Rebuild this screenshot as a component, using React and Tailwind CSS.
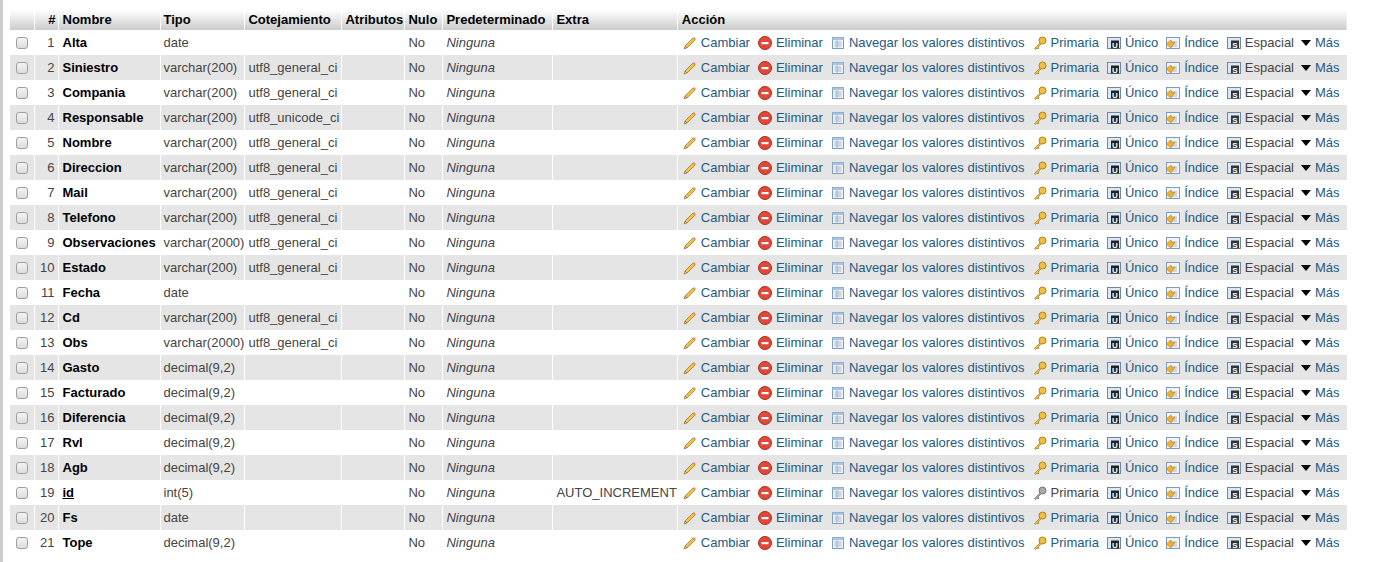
const rows = [
["Alta","date","",""],["Siniestro","varchar(200)","utf8_general_ci",""],["Compania","varchar(200)","utf8_general_ci",""],["Responsable","varchar(200)","utf8_unicode_ci",""],["Nombre","varchar(200)","utf8_general_ci",""],["Direccion","varchar(200)","utf8_general_ci",""],["Mail","varchar(200)","utf8_general_ci",""],["Telefono","varchar(200)","utf8_general_ci",""],["Observaciones","varchar(2000)","utf8_general_ci",""],["Estado","varchar(200)","utf8_general_ci",""],["Fecha","date","",""],["Cd","varchar(200)","utf8_general_ci",""],["Obs","varchar(2000)","utf8_general_ci",""],["Gasto","decimal(9,2)","",""],["Facturado","decimal(9,2)","",""],["Diferencia","decimal(9,2)","",""],["Rvl","decimal(9,2)","",""],["Agb","decimal(9,2)","",""],["id","int(5)","","AUTO_INCREMENT"],["Fs","date","",""],["Tope","decimal(9,2)","",""]];

const Pencil = () => (<svg width="16" height="16" viewBox="0 0 16 16"><path d="M3 11 L11 3 L13 5 L5 13 Z" fill="#f3c24b" stroke="#b07a1a" strokeWidth="0.8"/><path d="M11 3 L12 2 L14 4 L13 5Z" fill="#e88"/><path d="M3 11 L5 13 L2 14 Z" fill="#e8d0a0" stroke="#806030" strokeWidth="0.6"/></svg>);
const Del = () => (<svg width="16" height="16" viewBox="0 0 16 16"><circle cx="8" cy="8" r="6.5" fill="#e04838" stroke="#b02a20"/><rect x="4.5" y="7" width="7" height="2.2" fill="#fff"/></svg>);
const Browse = () => (<svg width="16" height="16" viewBox="0 0 16 16"><rect x="2.5" y="2.5" width="11" height="11" fill="#eef4fb" stroke="#7c9cc0"/><rect x="2.5" y="2.5" width="11" height="2.5" fill="#a8c4e0"/><path d="M4.5 7h7M4.5 9h7M4.5 11h7M7 5v8" stroke="#9ab" strokeWidth="0.8"/></svg>);
const Key = ({g}) => (<svg width="16" height="16" viewBox="0 0 16 16"><circle cx="10.5" cy="5.5" r="3.5" fill={g?"#aaa":"#f0c040"} stroke={g?"#777":"#b08020"}/><path d="M8 8 L2.5 13.5 L3.5 14.5 L5 13 L6 14 L7 13 L6 12 L9 9" fill={g?"#aaa":"#f0c040"} stroke={g?"#777":"#b08020"} strokeWidth="0.8"/></svg>);
const Uniq = () => (<svg width="16" height="16" viewBox="0 0 16 16"><rect x="1.5" y="2.5" width="13" height="11" fill="#dfe8f2" stroke="#6a88aa"/><rect x="5" y="5.5" width="8" height="8" fill="#222"/><text x="9" y="12.5" fontSize="8" fontWeight="bold" fill="#fff" textAnchor="middle" fontFamily="Liberation Sans">U</text></svg>);
const Idx = () => (<svg width="16" height="16" viewBox="0 0 16 16"><rect x="1.5" y="2.5" width="13" height="11" fill="#eef4fb" stroke="#7c9cc0"/><path d="M4 7h8M4 9h8M4 11h8" stroke="#9ab" strokeWidth="0.8"/><path d="M1 9 L6 5 L7 8 L10 7 L6 13 Z" fill="#f0b030" stroke="#c08010" strokeWidth="0.6"/></svg>);
const Spat = () => (<svg width="16" height="16" viewBox="0 0 16 16"><rect x="1.5" y="2.5" width="13" height="11" fill="#dfe8f2" stroke="#6a88aa"/><rect x="5" y="5.5" width="8" height="8" fill="#333"/><text x="9" y="12.5" fontSize="8" fontWeight="bold" fill="#fff" textAnchor="middle" fontFamily="Liberation Sans">S</text></svg>);

const A = ({icon, text, gray}) => (<div className="flex items-center gap-[3px] mr-[7px]">{icon}<span className={gray ? "text-[#444]" : "text-[#235a81]"}>{text}</span></div>);

export default function App() {
  return (
    <div className="w-[1382px] h-[562px] bg-white border-l-[3px] border-[#ccc] pt-[10px] pl-[7px]" style={{fontFamily:'"Liberation Sans", Arial, sans-serif'}}>
      <table className="border-collapse text-[13px] text-[#444] w-[1337px]">
        <thead>
          <tr className="h-[20px] bg-gradient-to-b from-white to-[#ccc] font-bold text-black text-left">
            <th className="w-[24px] border-r border-[#fff]"></th>
            <th className="w-[24px] text-right pr-[2px] border-r border-white">#</th>
            <th className="w-[102px] pl-[4px] border-r border-white">Nombre</th>
            <th className="w-[84px] pl-[3px] border-r border-white">Tipo</th>
            <th className="w-[97px] pl-[3px] border-r border-white">Cotejamiento</th>
            <th className="w-[63px] pl-[3px] border-r border-white">Atributos</th>
            <th className="w-[38px] pl-[3px] border-r border-white">Nulo</th>
            <th className="w-[110px] pl-[3px] border-r border-white">Predeterminado</th>
            <th className="w-[124px] pl-[3px] border-r border-white">Extra</th>
            <th className="pl-[4px]">Acción</th>
          </tr>
        </thead>
        <tbody>
          {rows.map((r, i) => (
            <tr key={i} className={"h-[25px] " + (i % 2 ? "bg-[#e5e5e5]" : "bg-white")}>
              <td className="text-center border-r border-white"><span className="inline-block w-[12px] h-[12px] rounded-[3px] border border-[#a0a0a0] bg-gradient-to-b from-[#f4f4f4] to-[#dcdcdc] align-middle"></span></td>
              <td className="text-right pr-[3px] border-r border-white">{i + 1}</td>
              <td className="pl-[4px] font-bold text-black border-r border-white"><span className={r[0] === "id" ? "underline" : ""}>{r[0]}</span></td>
              <td className="pl-[3px] border-r border-white">{r[1]}</td>
              <td className="pl-[3px] border-r border-white">{r[2]}</td>
              <td className="border-r border-white"></td>
              <td className="pl-[3px] border-r border-white">No</td>
              <td className="pl-[3px] italic border-r border-white">Ninguna</td>
              <td className="pl-[3px] border-r border-white whitespace-nowrap">{r[3]}</td>
              <td className="pl-[4px] whitespace-nowrap">
                <div className="flex items-center">
                  <A icon={<Pencil />} text="Cambiar" />
                  <A icon={<Del />} text="Eliminar" />
                  <A icon={<Browse />} text="Navegar los valores distintivos" />
                  <A icon={<Key g={r[0] === "id"} />} text="Primaria" gray={r[0] === "id"} />
                  <A icon={<Uniq />} text="Único" />
                  <A icon={<Idx />} text="Índice" />
                  <A icon={<Spat />} text="Espacial" gray />
                  <div className="flex items-center gap-[4px]"><span className="w-0 h-0 border-l-[5px] border-r-[5px] border-t-[6px] border-l-transparent border-r-transparent border-t-black"></span><span className="text-[#235a81]">Más</span></div>
                </div>
              </td>
            </tr>
          ))}
        </tbody>
      </table>
    </div>
  );
}
